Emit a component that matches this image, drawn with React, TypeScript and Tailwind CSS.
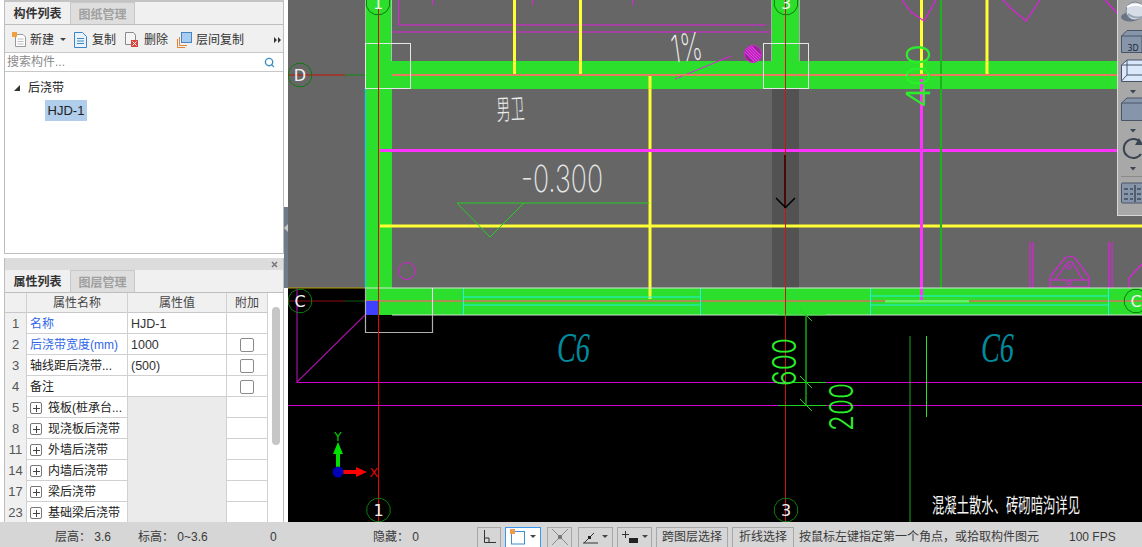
import React from "react";
import { Search } from "lucide-react";

const sans = "font-['Liberation_Sans','Noto_Sans_CJK_SC',sans-serif]";

function Gon({ x, y, label, r = 12 }: { x: number; y: number; label: string; r?: number }) {
  const pts = Array.from({ length: 12 }, (_, i) => {
    const a = ((i + 0.5) * Math.PI) / 6;
    return `${x + r * Math.cos(a)},${y + r * Math.sin(a)}`;
  }).join(" ");
  return (
    <g>
      <polygon points={pts} fill="none" stroke="#0d7a0d" strokeWidth="1" />
      <text x={x} y={y + 6} textAnchor="middle" fontSize="16" fill="#f2f2f2" fontFamily="DejaVu Sans">{label}</text>
    </g>
  );
}

function Thin({ x, y, w, size, rot, fill, children, family = "Inter", weight = 200, italic = false }: any) {
  return (
    <text x={x} y={y} fontSize={size} fill={fill} fontStyle={italic ? "italic" : "normal"} fontFamily={`"${family}", "Noto Sans CJK SC", sans-serif`} fontWeight={weight} textLength={w} lengthAdjust="spacingAndGlyphs" transform={rot ? `rotate(${rot} ${x} ${y})` : undefined}>
      {children}
    </text>
  );
}

function Canvas() {
  const G = "#2cdf2c";
  const M = "#ff33ff";
  const Y = "#ffff33";
  const DG = "#16a716";
  const hatch = [-6, -3, 0, 3, 6];
  return (
    <svg className="block w-[854px] h-[522px]" viewBox="288 0 854 522">
      <rect x="288" y="0" width="854" height="522" fill="#666666" />
      <rect x="288" y="288" width="854" height="234" fill="#000000" />
      <rect x="772" y="89" width="27" height="199" fill="#525252" />
      {/* magenta upper room */}
      <path d="M398.5 0V25H766M392 32H771" stroke="#e01fe0" fill="none" />
      <path d="M432.5 0V5M532.5 0V5M632.5 0V5" stroke="#e01fe0" />
      {/* green walls */}
      <rect x="365" y="0" width="27" height="288" fill={G} />
      <rect x="772" y="0" width="27" height="62" fill={G} />
      <rect x="392" y="61" width="725" height="28" fill={G} />
      <rect x="365" y="288" width="777" height="27" fill={G} />
      <path d="M365.5 0V88M391.5 0V61M771.5 0V61M799.5 0V61" stroke="#c8c8c8" strokeOpacity=".7" />
      <path d="M365.5 88V288" stroke="#22c7c7" strokeWidth="1.5" />
      {/* yellow */}
      <path d="M514.5 0V74M580.5 0V74M921.5 0V74M987 0V74" stroke={Y} strokeWidth="3" />
      <path d="M650 76V299" stroke={Y} strokeWidth="3" />
      <path d="M380 226H1142" stroke={Y} strokeWidth="3" />
      {/* magenta */}
      <path d="M380 150.5H1117" stroke={M} strokeWidth="3" />
      <path d="M921.5 79V300" stroke={M} strokeWidth="3" />
      <path d="M902 0L911 12L924 21L936 0M1003 0L1013 10L1026 21L1040 0M1105 0L1117 13" stroke="#e01fe0" fill="none" strokeWidth="1.2" />
      <path d="M675 79L731 56" stroke="#e01fe0" />
      <defs>
        <clipPath id="hc"><circle cx="753" cy="54" r="8" /></clipPath>
      </defs>
      <circle cx="753" cy="54" r="8.5" fill="#8c2a8c" stroke="#e01fe0" />
      {hatch.map((d) => (
        <path key={d} d={`M${743 + d} ${44}L${763 + d} ${64}`} stroke="#ff33ff" strokeWidth="1.2" clipPath="url(#hc)" />
      ))}
      <circle cx="407" cy="271" r="8.5" fill="none" stroke="#d81fd8" />
      <path d="M1030 242V288M1033 242V288M1109 242V288M1112 242V288" stroke="#e01fe0" strokeWidth="1.2" />
      <path d="M1050 287V277L1065 258Q1069 255 1075 258L1089 277V287ZM1050 280H1089M1055 280L1068 262H1072L1083 280" fill="none" stroke="#e01fe0" strokeWidth="1.2" />
      <circle cx="1069" cy="267" r="2" fill="none" stroke="#e01fe0" />
      <circle cx="1069" cy="283" r="2" fill="none" stroke="#e01fe0" />
      <path d="M1129 287V278L1142 264" fill="none" stroke="#e01fe0" strokeWidth="1.2" />
      <path d="M941 0V288" stroke="#1cb41c" strokeWidth="2" />
      {/* salmon axes */}
      <path d="M392 75H1117" stroke="#e87a62" strokeWidth="2" />
      <path d="M365 301H1142" stroke="#d9705f" strokeWidth="1.5" />
      <path d="M288 75H345" stroke="#a82c22" strokeWidth="1.5" />
      <path d="M345 75H365" stroke="#2e7d2e" strokeWidth="1.5" />
      <path d="M288 301H345" stroke="#8a0f0f" />
      <path d="M345 301H365" stroke="#0e5c0e" />
      <rect x="885" y="300" width="84" height="2.5" fill="#66ee66" />
      {/* cyan */}
      <path d="M463.5 288V315M700.5 288V315M463 297H701M463 305H701M870.5 288V315M1108.5 288V315M870 296H1108M870 305H1108" stroke="#22f0e0" fill="none" />
      {/* band borders */}
      <path d="M365 288H1142M392 315H1142" stroke="#d0e8d0" strokeWidth="1" />
      <path d="M288 288H365" stroke="#b0a000" />
      {/* blue grip & boxes */}
      <rect x="365" y="301" width="13" height="14" fill="#4040ff" />
      <rect x="365.5" y="43.5" width="45" height="45" fill="none" stroke="#e6e6e6" />
      <rect x="763.5" y="43.5" width="45" height="45" fill="none" stroke="#e6e6e6" />
      <path d="M365.5 288V332.5H432.5V288" fill="none" stroke="#b0b0b0" strokeWidth="1.2" />
      <path d="M432.5 288V315" stroke="#e6e6e6" />
      {/* lower magenta */}
      <path d="M297 288V382L365 315" stroke="#a010a0" fill="none" strokeWidth="1.2" />
      <path d="M297 382.5H1142" stroke="#d000d0" />
      <path d="M288 405.5H1142" stroke="#d000d0" />
      {/* red axes */}
      <path d="M378.5 0V522" stroke="#f00000" />
      <path d="M785.5 0V522" stroke="#d01414" />
      <path d="M785 155V208" stroke="#4a0a0a" strokeWidth="2" />
      <path d="M776 198L785.5 207.5L795 198" stroke="#000" fill="none" strokeWidth="1.5" />
      {/* triangle */}
      <path d="M457 203H524L490 237ZM524 203H649" stroke="#22d022" fill="none" />
      {/* dims */}
      <path d="M806 315V406" stroke={DG} strokeWidth="1.5" />
      <path d="M778 315H826M790 382.5H826M778 405.5H826" stroke="#22d022" />
      <path d="M800 309L812 321M800 376L812 388M800 399L812 411" stroke="#22d022" />
      <path d="M910 336V522" stroke={DG} />
      <path d="M926.5 336V417" stroke="#22e022" />
      <Thin x={796} y={386} w={48} size={33} rot={-90} fill="#2aee2a" weight={300}>600</Thin>
      <Thin x={853} y={431} w={48} size={33} rot={-90} fill="#2aee2a" weight={300}>200</Thin>
      <Thin x={930} y={108} w={64} size={32} rot={-90} fill="#2aee2a" weight={300}>400</Thin>
      {/* texts */}
      <Thin x={521} y={192} w={82} size={37} fill="#e6e6e6">-0.300</Thin>
      <Thin x={673} y={63} w={31} size={38} rot={-8} fill="#eeeeee">1%</Thin>
      <Thin x={497} y={120} w={28} size={28} rot={-3} fill="#eeeeee" family="Noto Sans CJK SC" weight={200}>男卫</Thin>
      <Thin x={932} y={513} w={148} size={20} fill="#f4f4f4" family="Noto Sans CJK SC" weight={400}>混凝土散水、砖砌暗沟详见</Thin>
      <Thin x={557} y={362} w={33} size={42} fill="#008b9e" family="Liberation Serif" weight={400} italic>C6</Thin>
      <Thin x={981} y={362} w={33} size={42} fill="#008b9e" family="Liberation Serif" weight={400} italic>C6</Thin>
      {/* grid heads */}
      <Gon x={300} y={75} label="D" />
      <Gon x={300} y={301} label="C" />
      <Gon x={1136} y={301} label="C" />
      <Gon x={378} y={3} label="1" />
      <Gon x={786} y={3} label="3" />
      <Gon x={378.5} y={510} label="1" />
      <Gon x={786} y={510} label="3" />
      {/* UCS */}
      <path d="M338 470V452" stroke="#00e000" strokeWidth="4" />
      <path d="M333 454L338 442L343 454Z" fill="#00e000" />
      <path d="M340 472H358" stroke="#ff0000" strokeWidth="4" />
      <path d="M356 467L367 472L356 477Z" fill="#ff0000" />
      <circle cx="338" cy="472" r="5.5" fill="#0000b4" />
      <text x="338" y="441" textAnchor="middle" fontSize="12" fill="#00d000" fontFamily="DejaVu Sans">Y</text>
      <text x="374" y="477" textAnchor="middle" fontSize="13" fill="#e00000" fontFamily="DejaVu Sans">X</text>
    </svg>
  );
}

function ViewBar() {
  const s = "#4a5568";
  const f = "#8795aa";
  return (
    <div className="absolute right-0 top-0 w-[25px] h-[216px] bg-[#a8a8a8] border-l border-b border-[#d8d8d8] overflow-hidden">
      <svg className="block" width="25" height="216" viewBox="1118 0 25 216">
        <ellipse cx="1130" cy="17" rx="9" ry="4.5" fill="#6a7484" />
        <circle cx="1135" cy="11" r="9" fill="#d6dde6" stroke="#7a8696" />
        <path d="M1127 7Q1134 3 1143 6" fill="none" stroke="#ffffff" strokeWidth="2" />
        <path d="M1128 14Q1134 19 1143 17" fill="none" stroke="#98a4b4" strokeWidth="2" />
        <path d="M1121.5 36H1142V52.5H1121.5ZM1121.5 36L1127 30.5H1143V36H1142" fill={f} stroke={s} />
        <text x="1133" y="51" fontSize="8" fill="#1f2a38" textAnchor="middle" fontFamily="DejaVu Sans">3D</text>
        <path d="M1121.5 65H1143V81.5H1121.5ZM1121.5 65L1127 60H1143V65" fill="#d9e9fb" stroke={s} />
        <path d="M1127 60V75H1143M1127 75L1121.5 81" fill="none" stroke={s} />
        <path d="M1130 90H1136L1133 93.5Z" fill="#3a4452" />
        <path d="M1121.5 103H1143V120.5H1121.5ZM1121.5 103L1127 98H1143V103" fill={f} stroke={s} />
        <path d="M1130 129H1136L1133 132.5Z" fill="#3a4452" />
        <path d="M1141 143A9.5 9.5 0 1 0 1141 154" fill="none" stroke="#3a4452" strokeWidth="2" />
        <path d="M1139 138L1143 145H1135Z" fill="#3a4452" />
        <path d="M1130 167H1136L1133 170.5Z" fill="#3a4452" />
        <path d="M1121 176.5H1143" stroke="#8a8a8a" />
        <rect x="1121.5" y="183" width="24" height="20" rx="1" fill={f} stroke={s} />
        <path d="M1124 189H1128M1124 194H1128M1124 199H1128M1130 189H1133M1130 194H1133M1130 199H1133M1135 185V202M1137 189H1141M1137 194H1141M1137 199H1141" stroke="#1d2632" />
      </svg>
    </div>
  );
}

function Tabs({ a, b }: { a: string; b: string }) {
  return (
    <div className="flex h-[23px] bg-[#f0f0f0] border-b border-[#bdbdbd] text-[12px]">
      <div className="w-[65px] pt-[2px] flex items-center justify-center font-bold text-[#333]">{a}</div>
      <div className="w-[65px] pt-[2px] flex items-center justify-center font-bold text-[#a0a0a0] bg-[#dedede] border-x border-t border-[#c8c8c8]">{b}</div>
    </div>
  );
}

function TopPanel() {
  return (
    <div className="mx-[4px] h-[254px] flex flex-col border-x border-b border-[#bdbdbd] border-t-2 border-t-[#c4c4c4] bg-white">
      <Tabs a="构件列表" b="图纸管理" />
      <div className="h-[28px] pt-[2px] bg-[#f0f0f0] border-b border-[#c8c8c8] flex items-center text-[12px] text-[#333] pl-[7px]">
        <svg width="15" height="16" viewBox="0 0 15 16" className="mr-[3px]">
          <path d="M3.5 2.5H11L13.5 5V14.5H3.5Z" fill="#fff" stroke="#999" />
          <path d="M5.5 7H11.5M5.5 9.5H11.5M5.5 12H11.5" stroke="#bbb" />
          <rect x="0" y="0" width="5" height="5" fill="#f0a040" />
        </svg>
        <span className="w-[24px]">新建</span>
        <svg width="6" height="4" className="ml-[6px] mr-[8px]"><path d="M0 0H6L3 3Z" fill="#444" /></svg>
        <svg width="13" height="16" viewBox="0 0 13 16" className="mr-[5px]">
          <path d="M.5 .5H8.5L12.5 4.5V15.500H.5Z" fill="#eaf3fc" stroke="#3d86c6" />
          <path d="M3 6.5H10M3 9H10M3 11.5H10" stroke="#3d86c6" />
        </svg>
        <span className="w-[24px]">复制</span>
        <svg width="14" height="15" viewBox="0 0 14 15" className="ml-[9px] mr-[5px]">
          <path d="M.5 .5H8.5L10.5 3V12.5H.5Z" fill="#f4f4f4" stroke="#8a8a8a" />
          <rect x="6" y="8" width="7" height="7" fill="#d9443a" />
          <path d="M7.5 9.5L11.5 13.5M11.5 9.5L7.5 13.5" stroke="#fff" />
        </svg>
        <span className="w-[24px]">删除</span>
        <svg width="15" height="16" viewBox="0 0 15 16" className="ml-[9px] mr-[4px]">
          <path d="M.5 7V15.5H8M2.5 5V13.5H10" fill="none" stroke="#e0843a" />
          <rect x="4.5" y=".5" width="10" height="10" fill="#a8cdf2" stroke="#4a84c0" />
        </svg>
        <span>层间复制</span>
        <span className="ml-auto mr-[2px] flex">
          <svg width="7" height="6"><path d="M0 0L3 3L0 6ZM4 0L7 3L4 6Z" fill="#333" /></svg>
        </span>
      </div>
      <div className="h-[19px] border-b border-[#c8c8c8] flex items-center pl-[2px] pr-[8px] text-[12px] text-[#8a8a8a]">
        <span>搜索构件...</span>
        <Search className="ml-auto text-[#3b8ec4]" size={11} strokeWidth={3} />
      </div>
      <div className="flex-1 text-[12px] text-[#222] pt-[6px]">
        <div className="h-[20px] flex items-center pl-[9px]">
          <svg width="6" height="6" className="mr-[8px]"><path d="M6 0V6H0Z" fill="#333" /></svg>
          <span>后浇带</span>
        </div>
        <div className="pl-[40px] mt-[2px]">
          <div className="w-[42px] h-[21px] bg-[#b0cdec] flex items-center justify-center text-[13px]">HJD-1</div>
        </div>
      </div>
    </div>
  );
}

const rows: { n: string; name: string; val?: string; blue?: boolean; chk?: boolean; group?: boolean }[] = [
  { n: "1", name: "名称", val: "HJD-1", blue: true },
  { n: "2", name: "后浇带宽度(mm)", val: "1000", blue: true, chk: true },
  { n: "3", name: "轴线距后浇带...", val: "(500)", chk: true },
  { n: "4", name: "备注", chk: true },
  { n: "5", name: "筏板(桩承台...", group: true },
  { n: "8", name: "现浇板后浇带", group: true },
  { n: "11", name: "外墙后浇带", group: true },
  { n: "14", name: "内墙后浇带", group: true },
  { n: "17", name: "梁后浇带", group: true },
  { n: "23", name: "基础梁后浇带", group: true },
];

function PropPanel() {
  const cols = "grid grid-cols-[22px_101px_99px_41px]";
  return (
    <div className="mx-[4px] mt-[4px] flex-1 min-h-0 flex flex-col border-x border-[#bdbdbd] bg-white overflow-hidden">
      <div className="h-[12px] bg-[#dcdcdc] flex items-center justify-end pr-[5px]">
        <svg width="7" height="7"><path d="M1 1L6 6M6 1L1 6" stroke="#777" strokeWidth="1.5" /></svg>
      </div>
      <Tabs a="属性列表" b="图层管理" />
      <div className="flex flex-1 min-h-0 text-[12px] text-[#222]">
        <div className="w-[263px] shrink-0">
          <div className={`${cols} h-[20px] bg-[#f0f0f0] border-b border-[#c8c8c8] text-center leading-[21px] text-[#444]`}>
            <div className="border-r border-[#d0d0d0]" />
            <div className="border-r border-[#d0d0d0]">属性名称</div>
            <div className="border-r border-[#d0d0d0]">属性值</div>
            <div className="border-r border-[#d0d0d0]">附加</div>
          </div>
          {rows.map((r) => (
            <div key={r.n} className={`${cols} h-[21px] border-b border-[#d0d0d0] leading-[22px]`}>
              <div className="bg-[#f0f0f0] border-r border-[#d0d0d0] text-center text-[13px] text-[#555]">{r.n}</div>
              <div className={`border-r border-[#d0d0d0] flex items-center whitespace-nowrap overflow-hidden pl-[3px] ${r.blue ? "text-[#2f66e8]" : ""}`}>
                {r.group && (
                  <span className="w-[12px] h-[12px] mr-[6px] shrink-0 border border-[#777] rounded-[2px] flex items-center justify-center">
                    <svg width="7" height="7"><path d="M3.5 0V7M0 3.5H7" stroke="#444" /></svg>
                  </span>
                )}
                <span>{r.name}</span>
              </div>
              <div className={`border-r border-[#d0d0d0] pl-[3px] text-[#333] text-[12.5px] ${r.group ? "bg-[#ebebeb]" : ""}`}>{r.val}</div>
              <div className="border-r border-[#d0d0d0] flex items-center justify-center">
                {r.chk && <span className="w-[14px] h-[14px] border border-[#8a8a8a] rounded-[2px] bg-white" />}
              </div>
            </div>
          ))}
        </div>
        <div className="flex-1 pt-[14px] pl-[4px]">
          <div className="w-[8px] h-[138px] rounded-[4px] bg-[#c6c6c6]" />
        </div>
      </div>
    </div>
  );
}

function Btn({ children, w, sel }: { children: React.ReactNode; w: number; sel?: boolean }) {
  return (
    <div style={{ width: w }} className={`h-[24px] pb-[5px] shrink-0 flex items-center justify-center border ${sel ? "border-[#3b96f0] bg-white" : "border-[#a8a8a8] bg-[#d6d6d6]"}`}>
      {children}
    </div>
  );
}

const Caret = () => <svg width="6" height="4" className="ml-[4px]"><path d="M0 0H6L3 3Z" fill="#444" /></svg>;

function Status() {
  return (
    <div className="h-[25px] pt-[5px] bg-[#d6d6d6] flex items-start text-[12px] leading-[20px] text-[#3a3a3a] whitespace-nowrap overflow-hidden">
      <span className="w-[55px] shrink-0" />
      <span className="w-[83px] shrink-0">层高： 3.6</span>
      <span className="w-[132px] shrink-0">标高： 0~3.6</span>
      <span className="w-[103px] shrink-0">0</span>
      <span className="w-[104px] shrink-0">隐藏： 0</span>
      <div className="flex items-start gap-[4px]">
        <Btn w={24}>
          <svg width="14" height="14"><path d="M2.5 0V12.5H14M2.5 8H7V12.5" fill="none" stroke="#333" /></svg>
        </Btn>
        <Btn w={36} sel>
          <svg width="16" height="17" viewBox="0 0 16 17"><rect x="1.5" y="3.5" width="13" height="12.5" fill="none" stroke="#3b8ed0" /><rect x="0" y="1" width="5" height="5" fill="#f09a50" /></svg>
          <Caret />
        </Btn>
        <div className="ml-[2px]">
          <Btn w={25}>
            <svg width="18" height="18"><path d="M1 1L17 17M17 1L1 17" stroke="#8f8f8f" /><rect x="7" y="7" width="4" height="4" fill="#777" /></svg>
          </Btn>
        </div>
        <div className="ml-[2px]">
          <Btn w={35}>
            <svg width="15" height="14"><path d="M0 13H15M1 13L11 3" fill="none" stroke="#333" /><rect x="5" y="6" width="3" height="3" fill="#222" /></svg>
            <Caret />
          </Btn>
        </div>
        <Btn w={35}>
          <svg width="16" height="14"><path d="M3.5 1V8M0 4.5H7" stroke="#333" /><rect x="7" y="8" width="9" height="5" fill="#222" /></svg>
          <Caret />
        </Btn>
        <Btn w={72}>跨图层选择</Btn>
        <Btn w={62}>折线选择</Btn>
      </div>
      <span className="ml-[5px] w-[270px] shrink-0">按鼠标左键指定第一个角点，或拾取构件图元</span>
      <span>100 FPS</span>
    </div>
  );
}

export default function App() {
  return (
    <div className={`w-[1142px] h-[547px] flex flex-col overflow-hidden ${sans}`}>
      <div className="flex h-[522px]">
        <div className="relative w-[288px] shrink-0 flex flex-col bg-white">
          <TopPanel />
          <PropPanel />
          <div className="absolute right-0 top-[207px] w-[4px] h-[81px] bg-[#6f7a88]">
            <svg width="4" height="8" className="absolute top-[17px]"><path d="M4 0V8L0 4Z" fill="#c8c8c8" /></svg>
          </div>
        </div>
        <div className="relative w-[854px]">
          <Canvas />
          <ViewBar />
        </div>
      </div>
      <Status />
    </div>
  );
}
